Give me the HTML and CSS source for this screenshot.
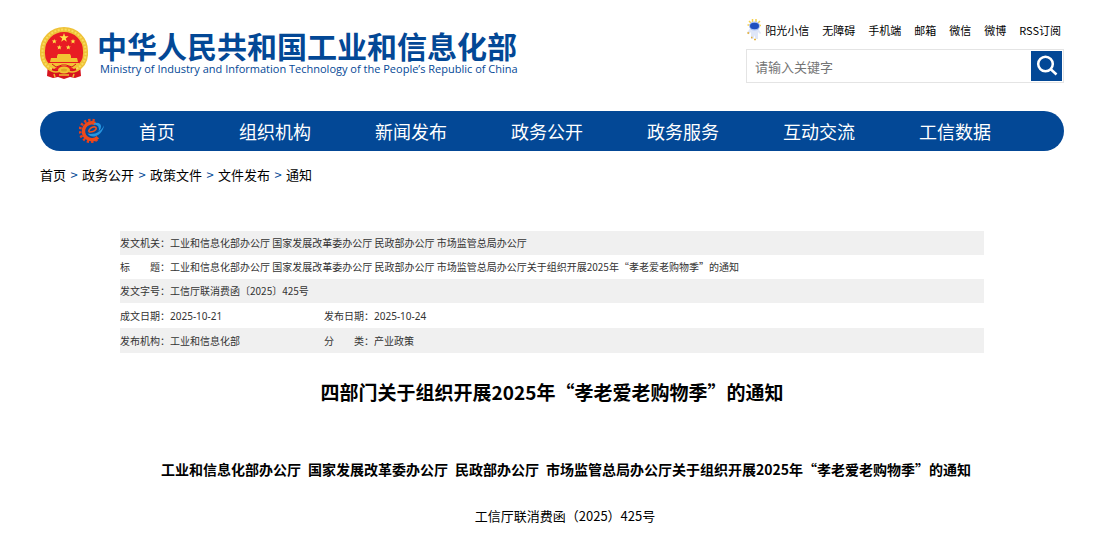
FILE: index.html
```html
<!DOCTYPE html>
<html lang="zh-CN">
<head>
<meta charset="utf-8">
<meta name="viewport" content="width=device-width, initial-scale=1">
<title>四部门关于组织开展2025年“孝老爱老购物季”的通知</title>
<link rel="stylesheet" href="styles.css">
</head>
<body>
<div class="page">
  <header class="header">
    <a class="brand" href="#">
      <svg class="emblem" viewBox="0 0 48 52" aria-hidden="true">
        <path d="M8 37L7 49l6 2 5-1 6 2 6-2 5 1 6-2-1-12z" fill="#d7141f"/>
        <circle cx="24" cy="23" r="21.500" fill="#e81c24"/>
        <path d="M12 42C4 38 2 31 2.500 24C2.500 12 12 2.500 24 2.500S45.500 12 45.500 24C46 31 44 38 36 42" fill="none" stroke="#efc238" stroke-width="5"/>
        <path d="M12 42C4 38 2 31 2.500 24C2.500 12 12 2.500 24 2.500S45.500 12 45.500 24C46 31 44 38 36 42" fill="none" stroke="#f8dc5c" stroke-width="2" stroke-dasharray="2 1.500"/>
        <path d="M24 6l1.100 3.300h3.500l-2.800 2.100 1 3.400-2.800-2-2.800 2 1-3.400-2.800-2.100h3.500z" fill="#ffe14a"/>
        <path d="M14.300 12l.7 1.600h1.700l-1.300 1.100 .5 1.700-1.600-1-1.600 1 .5-1.700-1.300-1.100h1.700zM33 12l.7 1.600h1.700l-1.300 1.100 .5 1.700-1.600-1-1.600 1 .5-1.700-1.300-1.100h1.700zM19.300 18l.7 1.600h1.700l-1.300 1.100 .5 1.700-1.600-1-1.600 1 .5-1.700-1.300-1.100h1.700zM28.300 18l.7 1.600h1.700l-1.300 1.100 .5 1.700-1.600-1-1.600 1 .5-1.700-1.300-1.100h1.700z" fill="#ffe14a"/>
        <path d="M18 27h12l1 2v2h6l1 4H10l1-4h6v-2z" fill="#f2c433"/>
        <path d="M9 36h30v3l-5 3-5-3H19l-5 3-5-3z" fill="#f2c433"/>
        <path d="M12 37l4 3 6-2h4l6 2 4-3" fill="none" stroke="#d7141f"/>
        <ellipse cx="24" cy="43" rx="6" ry="3.500" fill="#f2c433"/>
        <ellipse cx="24" cy="43" rx="3" ry="1.500" fill="#e0a824"/>
        <path d="M7 41q7 6 13 3M41 41q-7 6-13 3M14 47l1 3M34 47l-1 3M19 48h10" fill="none" stroke="#eebd31" stroke-width="1.500"/>
      </svg>
      <span class="brand-text">
        <span class="brand-zh">中华人民共和国工业和信息化部</span>
        <span class="brand-en">Ministry of Industry and Information Technology of the People’s Republic of China</span>
      </span>
    </a>
    <div class="tools">
      <nav class="links" aria-label="快捷入口">
        <a class="mascot-link" href="#">
          <svg class="mascot" viewBox="0 0 16 22" aria-hidden="true">
            <path d="M3 2l2 2M6.500 0v3M10 0v3M14 2l-2 2M1.500 6h2M13 6.500h2" stroke="#f5d04e" stroke-width="1.500"/>
            <path d="M3.500 10L1 14l2 1 2-2v7h2.500l1-4 1 4H12v-7l2 2 1-1-2.500-4z" fill="#dfe6f8"/>
            <ellipse cx="8.500" cy="7" rx="5.500" ry="4.500" fill="#a9c0f4"/>
            <ellipse cx="8.500" cy="7" rx="4.500" ry="3.200" fill="#1f4ebf"/>
            <path d="M1.500 13.500l1.500 1M5 18.500h1.500M8 20.500h2" stroke="#e5b23d" stroke-width="1.600"/>
          </svg>阳光小信</a>
        <a href="#">无障碍</a>
        <a href="#">手机端</a>
        <a href="#">邮箱</a>
        <a href="#">微信</a>
        <a href="#">微博</a>
        <a href="#">RSS订阅</a>
      </nav>
      <form class="search" role="search">
        <input class="search-input" type="text" placeholder="请输入关键字" aria-label="请输入关键字">
        <button class="search-button" type="button" aria-label="搜索">
          <svg class="search-icon" viewBox="0 0 22 22" fill="none" stroke="#fff" stroke-width="2.500" aria-hidden="true"><circle cx="9.500" cy="9" r="7.300"/><path d="M14.500 14l6 5.500"/></svg>
        </button>
      </form>
    </div>
  </header>

  <nav class="menu" aria-label="主导航">
    <svg class="menu-logo" viewBox="0 0 80 80" fill="none" aria-hidden="true">
      <path d="M48 9A33 33 0 1 0 60 62" stroke="#e8401c" stroke-width="9" stroke-dasharray="7 6"/>
      <path d="M50 17A26 26 0 1 0 58 59" stroke="#ee4a1b" stroke-width="11"/>
      <path d="M30 43Q46 44 52 35Q55 28 47 27Q34 28 29 42" stroke="#f1511b" stroke-width="5"/>
      <path d="M26 48C40 68 74 52 77 22C68 42 50 52 26 48z" fill="#2795df"/>
      <path d="M46 16Q66 11 68 26Q68 36 60 42Q63 31 59 25Q54 20 46 20z" fill="#2795df"/>
    </svg>
    <a href="#">首页</a>
    <a href="#">组织机构</a>
    <a href="#">新闻发布</a>
    <a href="#">政务公开</a>
    <a href="#">政务服务</a>
    <a href="#">互动交流</a>
    <a href="#">工信数据</a>
  </nav>

  <nav aria-label="当前位置">
    <ol class="crumbs">
      <li><a href="#">首页</a></li>
      <li><a href="#">政务公开</a></li>
      <li><a href="#">政策文件</a></li>
      <li><a href="#">文件发布</a></li>
      <li><a href="#">通知</a></li>
    </ol>
  </nav>

  <main class="article">
    <table class="meta">
      <colgroup><col class="col-label"><col class="col-value"><col class="col-label"><col></colgroup>
      <tbody>
        <tr><th scope="row">发文机关：</th><td colspan="3">工业和信息化部办公厅 国家发展改革委办公厅 民政部办公厅 市场监管总局办公厅</td></tr>
        <tr><th scope="row">标　　题：</th><td colspan="3">工业和信息化部办公厅 国家发展改革委办公厅 民政部办公厅 市场监管总局办公厅关于组织开展2025年“孝老爱老购物季”的通知</td></tr>
        <tr><th scope="row">发文字号：</th><td colspan="3">工信厅联消费函〔2025〕425号</td></tr>
        <tr class="split"><th scope="row">成文日期：</th><td class="date">2025-10-21</td><th scope="row">发布日期：</th><td class="date">2025-10-24</td></tr>
        <tr class="split"><th scope="row">发布机构：</th><td>工业和信息化部</td><th scope="row">分　　类：</th><td>产业政策</td></tr>
      </tbody>
    </table>
    <h1 class="title">四部门关于组织开展2025年“孝老爱老购物季”的通知</h1>
    <p class="subject">工业和信息化部办公厅&ensp;国家发展改革委办公厅&ensp;民政部办公厅&ensp;市场监管总局办公厅关于组织开展2025年“孝老爱老购物季”的通知</p>
    <p class="number">工信厅联消费函（2025）425号</p>
  </main>
</div>
</body>
</html>
```
FILE: styles.css
```css
* { box-sizing: border-box; }

body {
  margin: 0;
  background: #fff;
  color: #000;
  font-family: "Noto Sans CJK SC", "Noto Sans", sans-serif;
  font-size: 13px;
}

a { color: inherit; text-decoration: none; }

.page { padding: 19px 38px 0 40px; }

.header {
  display: flex;
  justify-content: space-between;
  align-items: flex-end;
}

.brand {
  display: flex;
  align-items: center;
  gap: 9px;
  padding-bottom: 4px;
  color: #034896;
  white-space: nowrap;
}

.emblem { width: 48px; height: 52px; }

.brand-text { display: flex; flex-direction: column; }

.brand-zh { font-size: 30px; font-weight: 700; line-height: 32px; }

.brand-en {
  padding-left: 3px;
  font-family: "Open Sans", sans-serif;
  font-size: 11px;
  line-height: 16px;
}

.tools {
  display: flex;
  flex-direction: column;
  gap: 8px;
  width: 318px;
}

.links {
  display: flex;
  justify-content: flex-end;
  align-items: center;
  gap: 13px;
  padding-right: 3px;
  font-size: 11px;
  line-height: 22px;
  white-space: nowrap;
}

.mascot-link { display: flex; align-items: center; gap: 3px; }

.mascot { width: 16px; height: 22px; }

.search {
  display: flex;
  height: 34px;
  padding: 1px;
  border: 1px solid #e4e4e4;
}

.search-input {
  flex: 1;
  min-width: 0;
  padding: 0 7px;
  border: 0;
  outline: 0;
  font: inherit;
}

.search-input::placeholder { color: #757575; }

.search-button {
  display: flex;
  align-items: center;
  justify-content: center;
  width: 31px;
  padding: 0;
  border: 0;
  background: #034896;
}

.search-icon { width: 22px; height: 22px; }

.menu {
  display: flex;
  align-items: center;
  gap: 64px;
  margin-top: 28px;
  padding-left: 39px;
  border-radius: 20px;
  background: #034896;
  color: #fff;
  font-size: 18px;
  line-height: 40px;
  white-space: nowrap;
}

.menu-logo { width: 26px; height: 26px; margin-right: -30px; }

.crumbs {
  display: flex;
  margin: 0;
  padding: 12px 0 0;
  list-style: none;
  line-height: 24px;
}

.crumbs li + li::before {
  content: ">";
  display: inline-block;
  width: 16px;
  color: #034896;
  text-align: center;
}

.article { padding: 44px 80px 20px; }

.meta {
  width: 100%;
  border-collapse: collapse;
  table-layout: fixed;
  color: #333;
  font-size: 10px;
  line-height: 20px;
}

.col-label { width: 50px; }
.col-value { width: 154px; }

.meta tr { height: 24px; }
.meta .split { height: 25px; }
.meta tr:nth-child(odd) { background: #f0f0f0; }

.meta th,
.meta td {
  padding: 0;
  font-weight: 400;
  text-align: left;
  white-space: nowrap;
}

.meta .date { font-family: "Noto Sans", sans-serif; }

.title {
  margin: 23px 0 0;
  font-size: 19px;
  line-height: 32px;
  text-align: center;
}

.subject,
.number {
  margin: 0;
  text-align: center;
  text-indent: 2em;
}

.subject {
  margin-top: 49px;
  font-size: 14px;
  font-weight: 700;
  line-height: 24px;
}

.number { margin-top: 23px; line-height: 24px; }
```
